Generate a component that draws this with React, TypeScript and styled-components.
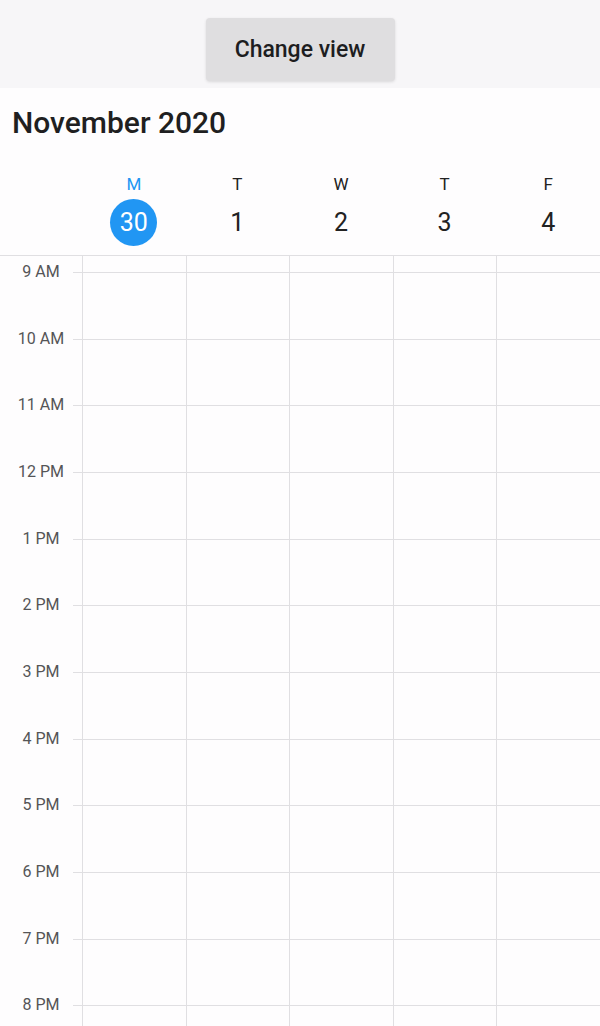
import styled, { createGlobalStyle } from 'styled-components';

const GlobalStyle = createGlobalStyle`
  html, body {
    margin: 0;
    padding: 0;
    background: #fefdfe;
  }
  body {
    font-family: Roboto, 'Noto Sans', sans-serif;
    color: #212121;
  }
`;

const days = [
  { letter: 'M', date: 30, today: true },
  { letter: 'T', date: 1, today: false },
  { letter: 'W', date: 2, today: false },
  { letter: 'T', date: 3, today: false },
  { letter: 'F', date: 4, today: false },
];

const hours = ['9 AM', '10 AM', '11 AM', '12 PM', '1 PM', '2 PM', '3 PM', '4 PM', '5 PM', '6 PM', '7 PM', '8 PM'];

const lineColour = '#e0dfe2';

const Page = styled.div`
  height: 100vh;
  overflow: hidden;
  display: flex;
  flex-direction: column;
  & > * {
    flex-shrink: 0;
  }
`;

const TopBar = styled.div`
  height: 88px;
  background: #f7f6f8;
  display: flex;
  justify-content: center;
  align-items: flex-start;
  box-sizing: border-box;
  padding-top: 18px;
`;

const ChangeButton = styled.button`
  width: 189px;
  height: 63px;
  border: none;
  border-radius: 4px;
  background: #dfdee0;
  box-shadow: 0 1px 3px rgba(0, 0, 0, 0.12);
  font-family: Roboto, sans-serif;
  font-size: 23px;
  font-weight: 500;
  color: #1d1d1f;
  padding: 0;
  cursor: pointer;
`;

const Title = styled.h1`
  margin: 0;
  padding: 17px 12px 0;
  height: 74px;
  box-sizing: border-box;
  font-size: 30px;
  font-weight: 500;
  line-height: 36px;
  color: #1f1f21;
`;

const Grid = styled.div`
  display: grid;
  grid-template-columns: 82px repeat(5, 1fr);
`;

const DayHeader = styled(Grid)`
  height: 94px;
  border-bottom: 1px solid ${lineColour};
  box-sizing: border-box;
`;

const DayCell = styled.div`
  display: flex;
  flex-direction: column;
  align-items: center;
`;

const DayLetter = styled.div<{ $today: boolean }>`
  font-size: 17px;
  line-height: 20px;
  margin-top: 12px;
  color: ${(p) => (p.$today ? '#2196f3' : '#222')};
`;

const DayNumber = styled.div<{ $today: boolean }>`
  width: 47px;
  height: 47px;
  margin-top: 5px;
  border-radius: 50%;
  display: flex;
  align-items: center;
  justify-content: center;
  font-size: 25px;
  background: ${(p) => (p.$today ? '#2196f3' : 'transparent')};
  color: ${(p) => (p.$today ? '#fff' : '#222')};
`;

const HourRow = styled(Grid)<{ $h: number }>`
  height: ${(p) => p.$h}px;
`;

const Gutter = styled.div<{ $tick: boolean }>`
  position: relative;
  &::after {
    content: '';
    display: ${(p) => (p.$tick ? 'block' : 'none')};
    position: absolute;
    right: 0;
    top: 0;
    width: 9px;
    border-top: 1px solid ${lineColour};
  }
`;

const HourLabel = styled.span`
  display: block;
  text-align: center;
  font-size: 16px;
  line-height: 20px;
  color: #555557;
  transform: translateY(-50%);
`;

const Slot = styled.div<{ $line: boolean }>`
  border-left: 1px solid ${lineColour};
  border-top: ${(p) => (p.$line ? `1px solid ${lineColour}` : 'none')};
`;

const App = () => {
  return (
    <Page>
      <GlobalStyle />
      <TopBar>
        <ChangeButton>Change view</ChangeButton>
      </TopBar>
      <Title>November 2020</Title>
      <DayHeader>
        <div />
        {days.map((d, i) => (
          <DayCell key={i}>
            <DayLetter $today={d.today}>{d.letter}</DayLetter>
            <DayNumber $today={d.today}>{d.date}</DayNumber>
          </DayCell>
        ))}
      </DayHeader>
      <HourRow $h={16}>
        <Gutter $tick={false} />
        {days.map((_, i) => (
          <Slot key={i} $line={false} />
        ))}
      </HourRow>
      {hours.map((h) => (
        <HourRow key={h} $h={200 / 3}>
          <Gutter $tick>
            <HourLabel>{h}</HourLabel>
          </Gutter>
          {days.map((_, i) => (
            <Slot key={i} $line />
          ))}
        </HourRow>
      ))}
    </Page>
  );
};

export default App;
